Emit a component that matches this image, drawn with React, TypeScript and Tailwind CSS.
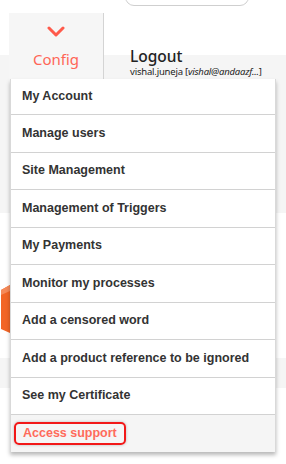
import React from "react";

const items = [
  "My Account",
  "Manage users",
  "Site Management",
  "Management of Triggers",
  "My Payments",
  "Monitor my processes",
  "Add a censored word",
  "Add a product reference to be ignored",
  "See my Certificate",
];

export default function App() {
  return (
    <div className="relative w-[286px] h-[464px] overflow-hidden bg-white">
      {/* Header */}
      <div className="h-[79px]">
        <div className="ml-[125px] -mt-[24px] h-[30px] w-[124px] rounded-[9px] border border-[#cfcfcf]" />
        <div className="mt-[7px] flex">
          <div className="ml-[9px] flex h-[66px] w-[95px] flex-col items-center border-r border-[#d4d4d4] bg-[#f6f6f6]">
            <svg width="18" height="12" viewBox="0 0 18 12" className="mt-[13px]">
              <path d="M2 2 L9 9 L16 2" fill="none" stroke="#ff5a4b" strokeWidth="3" strokeLinecap="round" strokeLinejoin="round" />
            </svg>
            <div className="mt-[12px] text-[15px] leading-[18px] text-[#ff6656]" style={{ fontFamily: '"Noto Sans", sans-serif' }}>
              Config
            </div>
          </div>
          <div className="ml-[26px] pt-[35px]" style={{ fontFamily: '"Noto Sans", sans-serif' }}>
            <div className="text-[15.5px] leading-[16px] font-medium text-[#222]">Logout</div>
            <div className="mt-[2px] text-[9.5px] leading-[11px] text-[#222] tracking-[-0.2px]">
              vishal.juneja [<span className="italic">vishal@andaazf...</span>]
            </div>
          </div>
        </div>
      </div>
      {/* Background page sections */}
      <div className="h-[158px] bg-[#f5f5f5]" />
      <div className="h-[145px] bg-white" />
      <div className="h-[30px] bg-[#f5f5f5]" />

      {/* Partially hidden orange element */}
      <svg className="absolute left-[1px] top-[285px]" width="9" height="48" viewBox="0 0 9 48">
        <polygon points="0,5 9,0 9,48 0,44" fill="#f26526" />
        <polygon points="0,5 9,0 9,6 0,10" fill="#f58a5a" />
      </svg>

      {/* Dropdown menu */}
      <div
        className="absolute left-[10px] top-[79px] w-[266px] border-x border-[#d9d9d9] bg-white shadow-[0_3px_4px_rgba(0,0,0,0.28)]"
        style={{ fontFamily: '"Liberation Sans", Arial, sans-serif' }}
      >
        {items.map((t, i) => (
          <div
            key={t}
            className={`flex items-center border-b border-[#d2d2d2] pl-[11px] text-[12.5px] font-bold text-[#333] ${
              i === 0 ? "h-[36px]" : "h-[37.5px]"
            }`}
          >
            {t}
          </div>
        ))}
        <div className="flex h-[37px] items-center bg-[#f5f5f5] pl-[3px]">
          <div className="flex h-[23px] items-center rounded-[5px] border-2 border-[#f21818] px-[7px] text-[12.5px] font-bold text-[#ff6b5b] shadow-[0_0_3px_rgba(0,0,0,0.25)]">
            Access support
          </div>
        </div>
      </div>
    </div>
  );
}
